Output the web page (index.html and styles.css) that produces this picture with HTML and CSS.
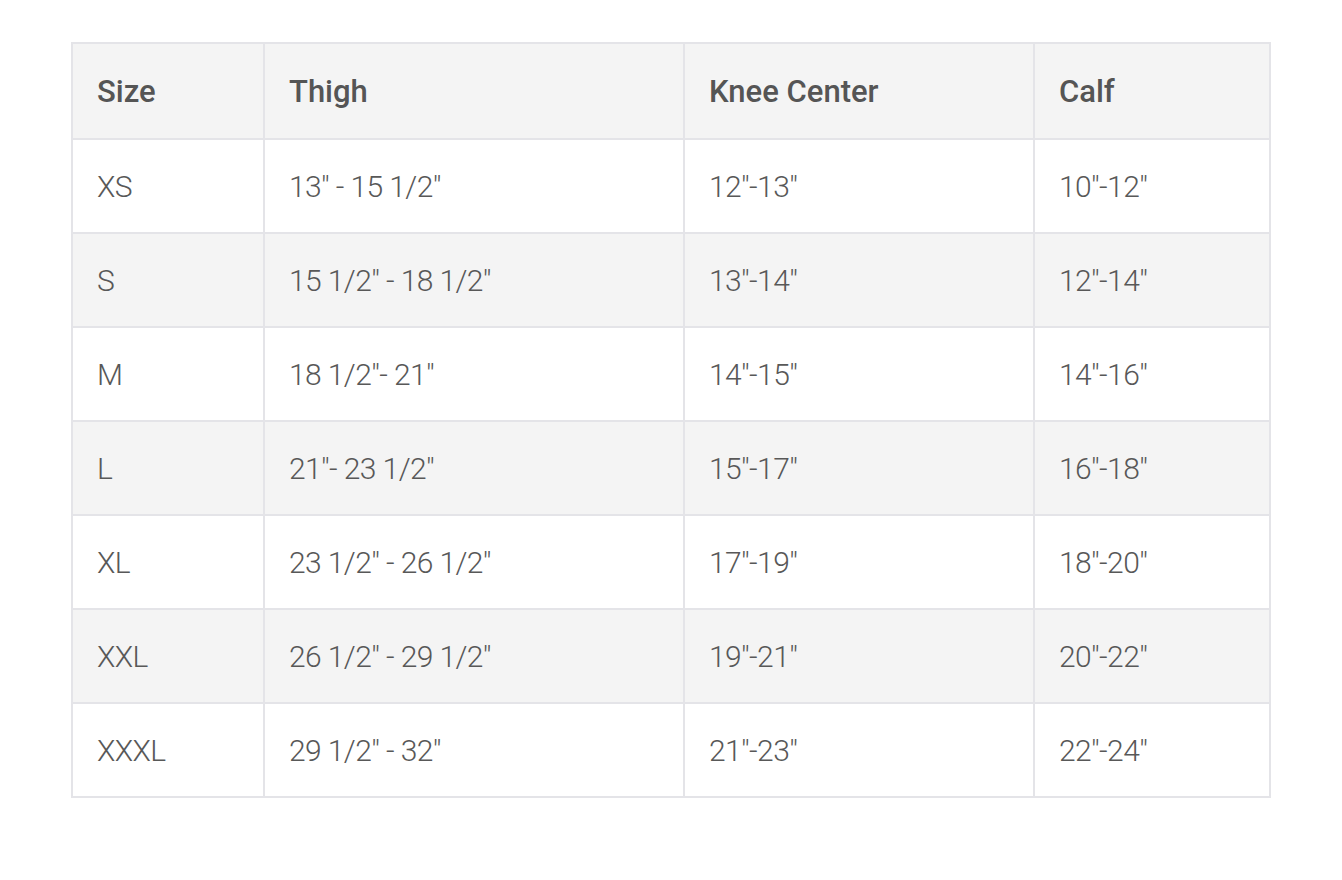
FILE: index.html
```html
<!DOCTYPE html>
<html>
<head>
<meta charset="utf-8">
<link rel="stylesheet" href="styles.css">
</head>
<body>
<div class="wrap">
<table class="size-table">
<colgroup>
<col class="c1"><col class="c2"><col class="c3"><col class="c4">
</colgroup>
<thead>
<tr><th>Size</th><th>Thigh</th><th>Knee Center</th><th>Calf</th></tr>
</thead>
<tbody>
<tr><td>XS</td><td>13″ - 15 1/2″</td><td>12″-13″</td><td>10″-12″</td></tr>
<tr><td>S</td><td>15 1/2″ - 18 1/2″</td><td>13″-14″</td><td>12″-14″</td></tr>
<tr><td>M</td><td>18 1/2″- 21″</td><td>14″-15″</td><td>14″-16″</td></tr>
<tr><td>L</td><td>21″- 23 1/2″</td><td>15″-17″</td><td>16″-18″</td></tr>
<tr><td>XL</td><td>23 1/2″ - 26 1/2″</td><td>17″-19″</td><td>18″-20″</td></tr>
<tr><td>XXL</td><td>26 1/2″ - 29 1/2″</td><td>19″-21″</td><td>20″-22″</td></tr>
<tr><td>XXXL</td><td>29 1/2″ - 32″</td><td>21″-23″</td><td>22″-24″</td></tr>
</tbody>
</table>
</div>
</body>
</html>
```
FILE: styles.css
```css
html, body {
  margin: 0;
  padding: 0;
  background: #ffffff;
}
.wrap {
  padding: 42px 71px 0 71px;
}
.size-table {
  width: 1198px;
  border-collapse: collapse;
  table-layout: fixed;
  font-family: Roboto, "Liberation Sans", sans-serif;
  color: #585858;
  border: 2px solid #e4e4e8;
}
.c1 { width: 192px; }
.c2 { width: 420px; }
.c3 { width: 350px; }
.c4 { width: 236px; }
.size-table th,
.size-table td {
  border: 2px solid #e4e4e8;
  text-align: left;
  padding: 0 0 0 24px;
  height: 92px;
  vertical-align: middle;
}
.size-table th {
  font-weight: 500;
  font-size: 31px;
  background: #f4f4f4;
  color: #555555;
  height: 94px;
}
.size-table td {
  font-weight: 300;
  font-size: 30px;
  letter-spacing: -0.6px;
}
.size-table tbody tr:nth-child(even) td {
  background: #f4f4f4;
}
```
